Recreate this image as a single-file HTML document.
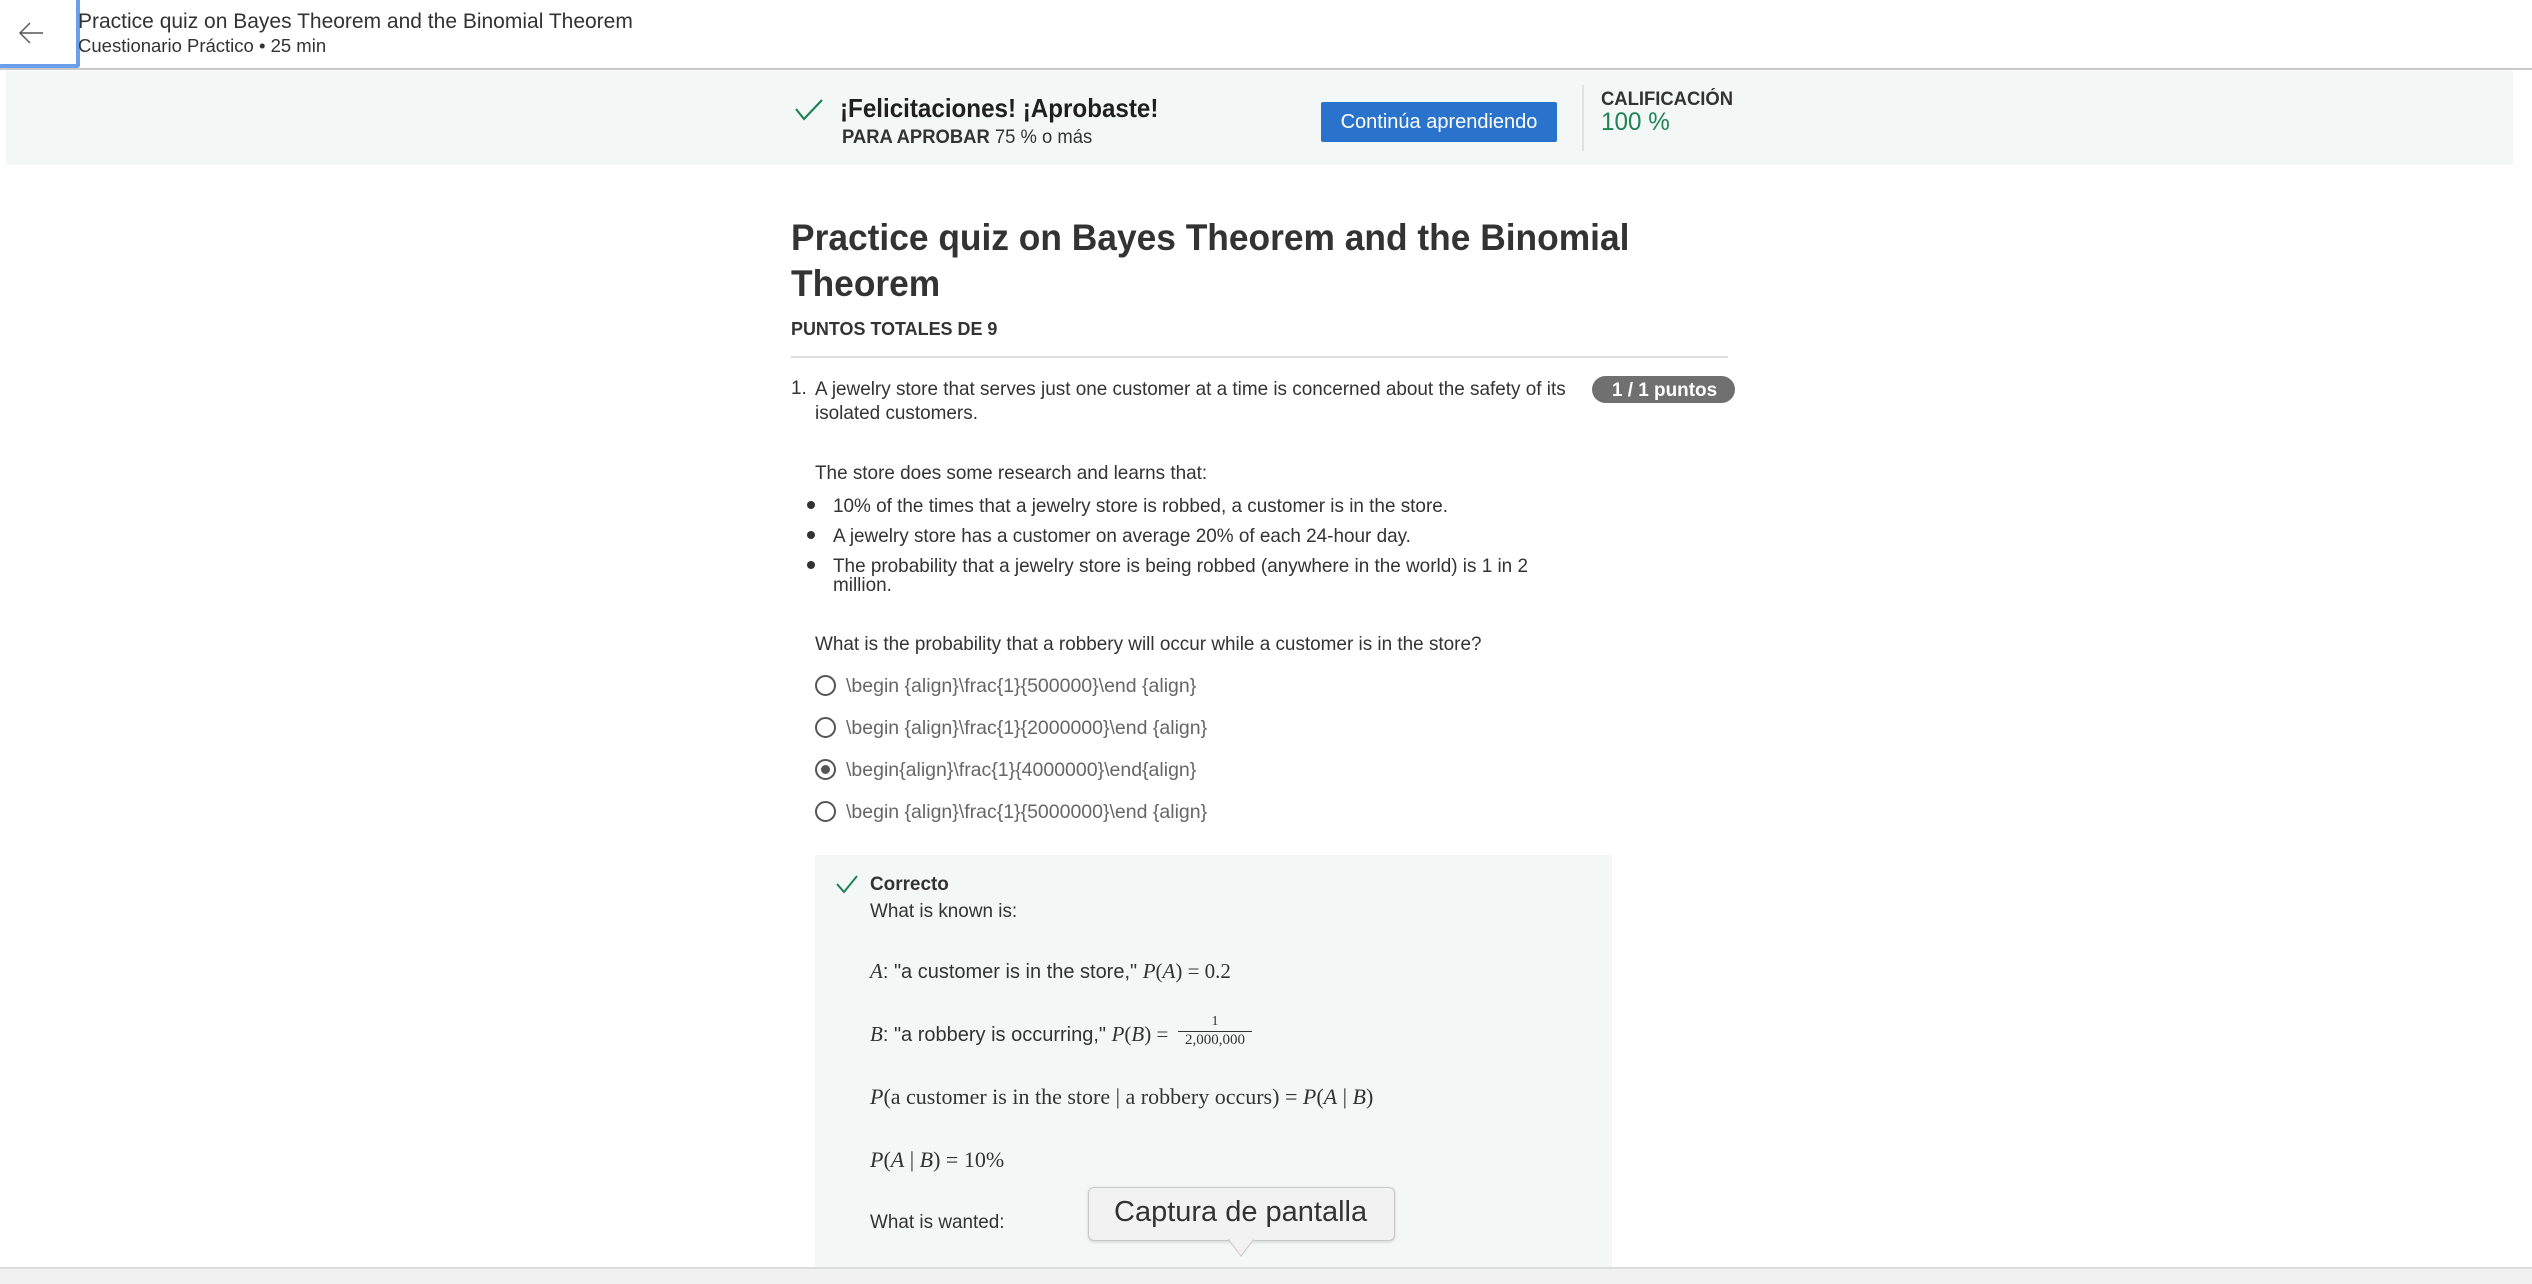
<!DOCTYPE html>
<html><head><meta charset="utf-8"><style>
body{margin:0;width:2532px;height:1282px;position:relative;overflow:hidden;background:#fff;font-family:"Liberation Sans",sans-serif;color:#1f1f1f}
.a{position:absolute;white-space:nowrap;transform-origin:0 50%;transform:scaleX(.97)}
.n{transform:none}
.s{font-family:"Liberation Serif",serif}
</style></head><body>
<div style="position:absolute;left:0;top:0;width:2532px;height:68px;border-bottom:2px solid #c9c9c9"></div>
<div style="position:absolute;left:0;top:0;width:76px;height:64px;border-right:4px solid #6c9fea;border-bottom:4px solid #6c9fea;border-bottom-right-radius:3px;background:#fff"></div>
<svg style="position:absolute;left:16px;top:18px" width="30" height="30" viewBox="0 0 30 30"><path d="M27 15H4M14 5L4 15l10 10" fill="none" stroke="#555" stroke-width="1.4"/></svg>
<div class="a n" style="left:78px;top:10px;font-size:21px;color:#333">Practice quiz on Bayes Theorem and the Binomial Theorem</div>
<div class="a n" style="left:78px;top:35px;font-size:18.5px;color:#333">Cuestionario Práctico • 25 min</div>

<div style="position:absolute;left:6px;top:71px;width:2507px;height:94px;background:#f3f8f6"></div>
<svg style="position:absolute;left:794px;top:98px" width="30" height="24" viewBox="0 0 30 24"><path d="M2 11l8 10L28 2" fill="none" stroke="#1f8354" stroke-width="2.2"/></svg>
<div class="a" style="left:840px;top:93px;font-size:26px;font-weight:bold;color:#1f1f1f;transform:scaleX(.93)">¡Felicitaciones! ¡Aprobaste!</div>
<div class="a" style="left:842px;top:127px;font-size:19px;color:#333"><b>PARA APROBAR</b> 75 % o más</div>
<div style="position:absolute;left:1321px;top:102px;width:236px;height:40px;background:#2a73cc;border-radius:2px"></div>
<div style="position:absolute;left:1321px;top:111px;width:236px;text-align:center;font-size:20px;color:#fff">Continúa aprendiendo</div>
<div style="position:absolute;left:1582px;top:85px;width:2px;height:66px;background:#dde3e1"></div>
<div class="a" style="left:1601px;top:89px;font-size:19px;font-weight:bold;color:#333">CALIFICACIÓN</div>
<div class="a" style="left:1601px;top:108px;font-size:25px;color:#1f8354">100 %</div>

<div class="a" style="left:791px;top:217px;font-size:37px;font-weight:bold;color:#333;transform:scaleX(.955)">Practice quiz on Bayes Theorem and the Binomial</div>
<div class="a" style="left:791px;top:263px;font-size:37px;font-weight:bold;color:#333;transform:scaleX(.955)">Theorem</div>
<div class="a" style="left:791px;top:318px;font-size:18.5px;font-weight:bold;color:#333">PUNTOS TOTALES DE 9</div>
<div style="position:absolute;left:791px;top:356px;width:937px;height:2px;background:#dcdcdc"></div>

<div class="a" style="left:791px;top:377px;font-size:19.5px;color:#333">1.</div>
<div class="a" style="left:815px;top:378px;font-size:19.5px;color:#333">A jewelry store that serves just one customer at a time is concerned about the safety of its</div>
<div class="a" style="left:815px;top:402px;font-size:19.5px;color:#333">isolated customers.</div>
<div style="position:absolute;left:1592px;top:376px;width:143px;height:27px;background:#707070;border-radius:14px"></div>
<div class="a" style="left:1612px;top:379px;font-size:19.5px;font-weight:bold;color:#fff">1 / 1 puntos</div>

<div class="a" style="left:815px;top:462px;font-size:19.5px;color:#333">The store does some research and learns that:</div>
<div style="position:absolute;left:807px;top:501px;width:8px;height:8px;border-radius:50%;background:#333"></div>
<div style="position:absolute;left:807px;top:531px;width:8px;height:8px;border-radius:50%;background:#333"></div>
<div style="position:absolute;left:807px;top:561px;width:8px;height:8px;border-radius:50%;background:#333"></div>
<div class="a" style="left:833px;top:495px;font-size:19.5px;color:#333">10% of the times that a jewelry store is robbed, a customer is in the store.</div>
<div class="a" style="left:833px;top:525px;font-size:19.5px;color:#333">A jewelry store has a customer on average 20% of each 24-hour day.</div>
<div class="a" style="left:833px;top:555px;font-size:19.5px;color:#333">The probability that a jewelry store is being robbed (anywhere in the world) is 1 in 2</div>
<div class="a" style="left:833px;top:574px;font-size:19.5px;color:#333">million.</div>
<div class="a" style="left:815px;top:633px;font-size:19.5px;color:#333">What is the probability that a robbery will occur while a customer is in the store?</div>

<div style="position:absolute;left:815px;top:675px;width:17px;height:17px;border:2px solid #555;border-radius:50%"></div>
<div style="position:absolute;left:815px;top:717px;width:17px;height:17px;border:2px solid #555;border-radius:50%"></div>
<div style="position:absolute;left:815px;top:759px;width:17px;height:17px;border:2px solid #555;border-radius:50%"></div>
<div style="position:absolute;left:821px;top:765px;width:9px;height:9px;background:#555;border-radius:50%"></div>
<div style="position:absolute;left:815px;top:801px;width:17px;height:17px;border:2px solid #555;border-radius:50%"></div>
<div class="a n" style="left:846px;top:675px;font-size:19.5px;color:#666">\begin {align}\frac{1}{500000}\end {align}</div>
<div class="a n" style="left:846px;top:717px;font-size:19.5px;color:#666">\begin {align}\frac{1}{2000000}\end {align}</div>
<div class="a n" style="left:846px;top:759px;font-size:19.5px;color:#666">\begin{align}\frac{1}{4000000}\end{align}</div>
<div class="a n" style="left:846px;top:801px;font-size:19.5px;color:#666">\begin {align}\frac{1}{5000000}\end {align}</div>

<div style="position:absolute;left:815px;top:855px;width:797px;height:420px;background:#f3f8f6"></div>
<svg style="position:absolute;left:835px;top:874px" width="24" height="20" viewBox="0 0 24 20"><path d="M2 10l7 8L22 2" fill="none" stroke="#1f8354" stroke-width="2"/></svg>
<div class="a" style="left:870px;top:873px;font-size:19.5px;font-weight:bold;color:#333">Correcto</div>
<div class="a" style="left:870px;top:900px;font-size:19.5px;color:#333">What is known is:</div>
<div class="a n" style="left:870px;top:959px;font-size:20px;color:#333"><i class="s" style="font-size:21px">A</i>: "a customer is in the store," <span class="s" style="font-size:21px"><i>P</i>(<i>A</i>) = 0.2</span></div>
<div class="a n" style="left:870px;top:1022px;font-size:20px;color:#333"><i class="s" style="font-size:21px">B</i>: "a robbery is occurring," <span class="s" style="font-size:21px"><i>P</i>(<i>B</i>) =</span></div>
<div class="a s n" style="left:1178px;top:1014px;font-size:14px;color:#333;text-align:center;width:74px">1</div>
<div style="position:absolute;left:1178px;top:1031px;width:74px;height:1px;background:#333"></div>
<div class="a s n" style="left:1178px;top:1032px;font-size:15px;color:#333;width:74px;text-align:center">2,000,000</div>
<div class="a s n" style="left:870px;top:1084px;font-size:22px;color:#333"><i>P</i>(a customer is in the store | a robbery occurs) = <i>P</i>(<i>A</i> | <i>B</i>)</div>
<div class="a s n" style="left:870px;top:1147px;font-size:22px;color:#333"><i>P</i>(<i>A</i> | <i>B</i>) = 10%</div>
<div class="a" style="left:870px;top:1211px;font-size:19.5px;color:#333">What is wanted:</div>

<div style="position:absolute;left:0;top:1267px;width:2532px;height:15px;background:#f1f1f1;border-top:2px solid #dcdcdc"></div>

<div style="position:absolute;left:1088px;top:1187px;width:305px;height:52px;background:#f2f2f2;border:1px solid #c8c8c8;border-radius:6px;box-shadow:0 1px 3px rgba(0,0,0,.15)"></div>
<svg style="position:absolute;left:1228px;top:1239px" width="26" height="18" viewBox="0 0 26 18"><path d="M0 0L13 17L26 0" fill="#f2f2f2" stroke="#c8c8c8"/><path d="M1 -1H25" stroke="#f2f2f2" stroke-width="3"/></svg>
<div class="a n" style="left:1114px;top:1196px;font-size:29px;color:#333">Captura de pantalla</div>
</body></html>
